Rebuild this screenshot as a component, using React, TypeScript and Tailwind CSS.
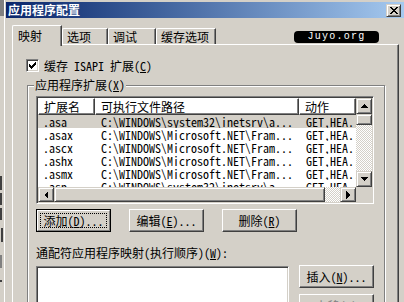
import React from "react";
import clsx from "clsx";

const raised =
  "border border-t-white border-l-white border-r-[#404040] border-b-[#404040] shadow-[inset_-1px_-1px_0_#808080]";
const sunken =
  "border border-t-[#808080] border-l-[#808080] border-r-white border-b-white shadow-[inset_1px_1px_0_#404040,inset_-1px_-1px_0_#d4d0c8]";
const scrollBtn =
  "border border-t-[#d4d0c8] border-l-[#d4d0c8] border-r-[#404040] border-b-[#404040] shadow-[inset_1px_1px_0_#fff,inset_-1px_-1px_0_#808080] bg-[#d4d0c8] flex items-center justify-center";
const checker =
  "bg-[repeating-conic-gradient(#d4d0c8_0_25%,#ffffff_0_50%)] bg-[length:2px_2px]";

const rows = [
  [".asa", "C:\\WINDOWS\\system32\\inetsrv\\a...", "GET,HEA..."],
  [".asax", "C:\\WINDOWS\\Microsoft.NET\\Fram...", "GET,HEA..."],
  [".ascx", "C:\\WINDOWS\\Microsoft.NET\\Fram...", "GET,HEA..."],
  [".ashx", "C:\\WINDOWS\\Microsoft.NET\\Fram...", "GET,HEA..."],
  [".asmx", "C:\\WINDOWS\\Microsoft.NET\\Fram...", "GET,HEA..."],
  [".asp", "C:\\WINDOWS\\system32\\inetsrv\\a...", "GET,HEA..."],
];

// little black triangle for the scroll arrows
const Arrow = ({ dir }: { dir: "up" | "down" | "left" | "right" }) => {
  const pts = {
    up: "0,4 4,0 8,4",
    down: "0,0 8,0 4,4",
    left: "4,0 4,8 0,4",
    right: "0,0 0,8 4,4",
  }[dir];
  const vertical = dir === "up" || dir === "down";
  return (
    <svg width={vertical ? 8 : 4} height={vertical ? 4 : 8} shapeRendering="crispEdges">
      <polygon points={pts} fill="#000" />
    </svg>
  );
};

const Key = ({ k }: { k: string }) => (
  <>
    (<u className="underline-offset-[1px]">{k}</u>)
  </>
);

const Btn = ({
  children,
  focus,
  disabled,
}: {
  children: React.ReactNode;
  focus?: boolean;
  disabled?: boolean;
}) =>
  focus ? (
    <div className="w-[75px] h-[23px] border border-black flex">
      <div className="flex-1 border border-t-white border-l-white border-r-[#808080] border-b-[#808080] p-[2px] flex">
        <div className="flex-1 border border-dotted border-black flex items-center justify-center leading-[14px]">
          {children}
        </div>
      </div>
    </div>
  ) : (
    <div
      className={clsx(
        "w-[75px] h-[23px] flex items-center justify-center leading-[14px]",
        raised,
        disabled && "text-[#808080]"
      )}
    >
      {children}
    </div>
  );

const HeaderCell = ({ children, w }: { children: React.ReactNode; w: string }) => (
  <div className={clsx("h-[17px] flex items-center pl-[5px] overflow-hidden whitespace-nowrap", raised, w)}>
    {children}
  </div>
);

export default function App() {
  return (
    <div className="relative w-[404px] h-[302px] overflow-hidden bg-[#d4d0c8] flex text-[12px] text-black font-['Noto_Sans_Mono_CJK_SC','Liberation_Mono','Noto_Sans_CJK_SC',monospace]">
      {/* sliver of the window behind */}
      <div className="w-[4px] flex flex-col">
        <div className="h-[16px] bg-[#808080]" />
        <div className="h-[160px]" />
        <div className="h-[14px] w-[2px] bg-[#404040]" />
        <div className="h-[3px]" />
        <div className="h-[12px] w-[2px] bg-[#404040]" />
        <div className="h-[3px]" />
        <div className="h-[12px] w-[2px] bg-[#404040]" />
        <div className="h-[8px]" />
        <div className="h-[14px] w-[2px] ml-[1px] bg-[#404040]" />
        <div className="h-[13px]" />
        <div className="h-[13px] w-[2px] bg-[#808080]" />
        <div className="h-[12px]" />
        <div className="h-[2px] w-[2px] bg-[#404040]" />
      </div>

      {/* dialog window */}
      <div className="flex-1 flex flex-col border-l border-white pt-[2px] pl-px">
        <div className="h-[18px] flex items-center justify-between bg-gradient-to-r from-[#0a246a] to-[#a6caf0]">
          <span className="pl-[2px] text-white font-bold leading-[16px]">应用程序配置</span>
          <div className={clsx("w-[15px] h-[13px] mr-[3px]", scrollBtn)}>
            <svg width="8" height="7" shapeRendering="crispEdges">
              <path d="M0,0h2l2,2.5l2,-2.5h2l-3,3.5l3,3.5h-2l-2,-2.5l-2,2.5h-2l3,-3.5z" fill="#000" />
            </svg>
          </div>
        </div>

        <div className="pl-[6px] pt-[7px] flex flex-col">
          {/* tabs */}
          <div className="flex items-end h-[19px]">
            <div className="relative z-10 w-[50px] h-[21px] -mb-[2px] bg-[#d4d0c8] border-t border-l border-white rounded-tl-[2px] border-r border-r-[#404040] shadow-[inset_-1px_0_0_#808080] pl-[5px] pt-[3px] leading-[14px]">
              映射
            </div>
            {[
              ["选项", "w-[46px]"],
              ["调试", "w-[48px]"],
              ["缓存选项", "w-[60px]"],
            ].map(([t, w]) => (
              <div
                key={t}
                className={clsx(
                  "h-[16px] border-t border-l border-white rounded-tl-[2px] border-r border-r-[#404040] shadow-[inset_-1px_0_0_#808080] pl-[4px] pt-[1px] leading-[14px]",
                  w
                )}
              >
                {t}
              </div>
            ))}
          </div>

          {/* tab panel */}
          <div className="w-[387px] h-[260px] border-t border-l border-white border-r border-r-[#404040] shadow-[inset_-1px_0_0_#808080] pl-[13px] pt-[14px] flex flex-col">
            <div className="flex items-center h-[13px]">
              <div className="w-[13px] h-[13px] bg-white border border-t-[#808080] border-l-[#808080] border-r-white border-b-white shadow-[inset_1px_1px_0_#404040,inset_-1px_-1px_0_#d4d0c8] flex items-center justify-center">
                <svg width="7" height="7" shapeRendering="crispEdges">
                  <path d="M0,2v3l2,2l5,-5v-3l-5,5z" fill="#000" />
                </svg>
              </div>
              <span className="ml-[5px] leading-[14px]">
                缓存 ISAPI 扩展<Key k="C" />
              </span>
            </div>

            {/* group box */}
            <div className="relative mt-[13px] ml-[1px] w-[358px] h-[230px] border border-[#808080] shadow-[inset_1px_1px_0_#fff,1px_1px_0_#fff] pl-[8px] pt-[10px] flex flex-col">
              <span className="absolute left-[6px] -top-[8px] px-[1px] bg-[#d4d0c8] leading-[14px]">
                应用程序扩展<Key k="X" />
              </span>

              {/* list view */}
              <div className={clsx("w-[338px] h-[108px] bg-white", sunken, "p-px")}>
                <div className="grid grid-cols-[318px_16px] grid-rows-[89px_15px]">
                  <div className="flex flex-col overflow-hidden">
                    <div className="flex">
                      <HeaderCell w="w-[57px]">扩展名</HeaderCell>
                      <HeaderCell w="w-[204px]">可执行文件路径</HeaderCell>
                      <HeaderCell w="w-[57px]">动作</HeaderCell>
                    </div>
                    {rows.map((r, i) => (
                      <div
                        key={i}
                        className={clsx("flex h-[13px] shrink-0 leading-[13px] whitespace-nowrap", i === 0 && "bg-[#d4d0c8]")}
                      >
                        <div className="w-[57px] pl-[5px] overflow-hidden">{r[0]}</div>
                        <div className="w-[204px] pl-[6px] overflow-hidden">{r[1]}</div>
                        <div className="w-[57px] pl-[7px] overflow-hidden">{r[2]}</div>
                      </div>
                    ))}
                  </div>
                  <div className="flex flex-col">
                    <div className={clsx("h-[16px]", scrollBtn)}>
                      <Arrow dir="up" />
                    </div>
                    <div className={clsx("h-[11px]", scrollBtn)} />
                    <div className={clsx("flex-1", checker)} />
                    <div className={clsx("h-[16px]", scrollBtn)}>
                      <Arrow dir="down" />
                    </div>
                  </div>
                  <div className="flex">
                    <div className={clsx("w-[16px]", scrollBtn)}>
                      <Arrow dir="left" />
                    </div>
                    <div className={clsx("w-[271px]", scrollBtn)} />
                    <div className={clsx("flex-1", checker)} />
                    <div className={clsx("w-[16px]", scrollBtn)}>
                      <Arrow dir="right" />
                    </div>
                  </div>
                  <div className="bg-[#d4d0c8]" />
                </div>
              </div>

              <div className="flex gap-[18px] mt-[5px]">
                <Btn focus>
                  添加<Key k="D" />...
                </Btn>
                <Btn>
                  编辑<Key k="E" />...
                </Btn>
                <Btn>
                  删除<Key k="R" />
                </Btn>
              </div>

              <div className="mt-[14px] leading-[14px]">
                通配符应用程序映射(执行顺序)<Key k="W" />:
              </div>

              <div className="flex gap-[10px] mt-[6px]">
                <div className={clsx("w-[253px] h-[60px] bg-white", sunken)} />
                <div className="flex flex-col gap-[6px] -mt-px">
                  <Btn>
                    插入<Key k="N" />...
                  </Btn>
                  <Btn disabled>
                    上移<Key k="U" />
                  </Btn>
                </div>
              </div>
            </div>
          </div>
        </div>
      </div>

      {/* watermark badge */}
      <div className="absolute left-[294px] top-[31px] w-[85px] h-[12px] rounded-[4px] bg-black flex items-center justify-center">
        <span className="text-white text-[10px] leading-[10px] tracking-[1.25px] font-['Liberation_Mono',monospace]">
          Juyo.org
        </span>
      </div>
    </div>
  );
}
